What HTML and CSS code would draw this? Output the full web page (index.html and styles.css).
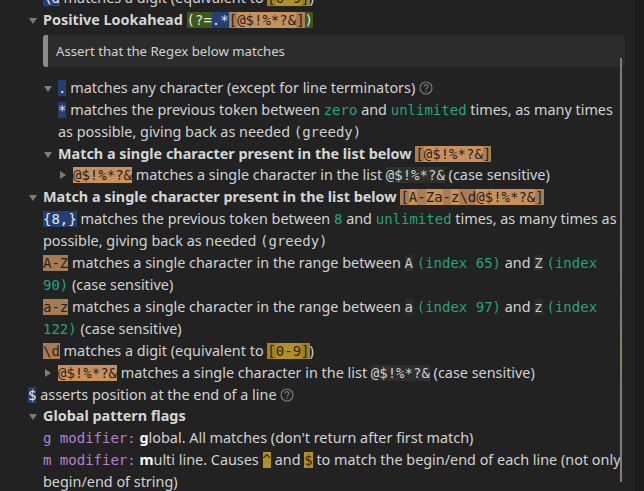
FILE: index.html
```html
<!DOCTYPE html>
<html>
<head>
<meta charset="utf-8">
<link rel="stylesheet" href="styles.css">
</head>
<body>
<div class="page">
  <div class="panel">
    <div class="root">
      <div class="kids first">
        <div class="row"><span class="tk meta">\d</span> matches a digit (equivalent to <span class="tk yel"><span class="yd">[</span>0-9<span class="yd">]</span></span>)</div>
      </div>
      <div class="row t head"><span class="tog down"></span>Positive Lookahead <span class="tk grp">(?=</span><span class="tk meta">.*</span><span class="tk cls"><span class="cd">[</span>@$!%*?&amp;<span class="cd">]</span></span><span class="tk grp">)</span></div>
      <div class="kids">
        <div class="quote">Assert that the Regex below matches</div>
        <div class="row t"><span class="tog down"></span><span class="tk meta">.</span> matches any character (except for line terminators) <svg class="help" width="14" height="14" viewBox="0 0 14 14"><circle cx="7" cy="7" r="6" fill="none" stroke="#7a7a7a" stroke-width="1.2"/><path d="M5.1 5.6a1.9 1.9 0 1 1 2.7 1.7c-.6.3-.8.6-.8 1.2" fill="none" stroke="#7a7a7a" stroke-width="1.2"/><circle cx="7" cy="10.2" r=".75" fill="#7a7a7a"/></svg></div>
        <div class="kids">
          <div class="row"><span class="tk meta">*</span> matches the previous token between <span class="mono grn">zero</span> and <span class="mono grn">unlimited</span> times, as many times as possible, giving back as needed <span class="mono">(greedy)</span></div>
        </div>
        <div class="row t head"><span class="tog down"></span>Match a single character present in the list below <span class="tk cls"><span class="cd">[</span>@$!%*?&amp;<span class="cd">]</span></span></div>
        <div class="kids">
          <div class="row t"><span class="tog right"></span><span class="tk cls">@$!%*?&amp;</span> matches a single character in the list <span class="tk code">@$!%*?&amp;</span> (case sensitive)</div>
        </div>
      </div>
      <div class="row t head"><span class="tog down"></span>Match a single character present in the list below <span class="tk cls"><span class="cd">[</span>A<span class="cd">-</span>Za<span class="cd">-</span>z<span class="cd">\d</span>@$!%*?&amp;<span class="cd">]</span></span></div>
      <div class="kids">
        <div class="row"><span class="tk meta">{8,}</span> matches the previous token between <span class="mono grn">8</span> and <span class="mono grn">unlimited</span> times, as many times as possible, giving back as needed <span class="mono">(greedy)</span></div>
        <div class="row"><span class="tk rng">A-Z</span> matches a single character in the range between <span class="tk code">A</span> <span class="mono grn">(index 65)</span> and <span class="tk code">Z</span> <span class="mono grn">(index 90)</span> (case sensitive)</div>
        <div class="row"><span class="tk rng">a-z</span> matches a single character in the range between <span class="tk code">a</span> <span class="mono grn">(index 97)</span> and <span class="tk code">z</span> <span class="mono grn">(index 122)</span> (case sensitive)</div>
        <div class="row"><span class="tk rng">\d</span> matches a digit (equivalent to <span class="tk yel"><span class="yd">[</span>0-9<span class="yd">]</span></span>)</div>
        <div class="row t"><span class="tog right"></span><span class="tk cls">@$!%*?&amp;</span> matches a single character in the list <span class="tk code">@$!%*?&amp;</span> (case sensitive)</div>
      </div>
      <div class="row"><span class="tk meta">$</span> asserts position at the end of a line <svg class="help" width="14" height="14" viewBox="0 0 14 14"><circle cx="7" cy="7" r="6" fill="none" stroke="#7a7a7a" stroke-width="1.2"/><path d="M5.1 5.6a1.9 1.9 0 1 1 2.7 1.7c-.6.3-.8.6-.8 1.2" fill="none" stroke="#7a7a7a" stroke-width="1.2"/><circle cx="7" cy="10.2" r=".75" fill="#7a7a7a"/></svg></div>
      <div class="row t head"><span class="tog down"></span>Global pattern flags</div>
      <div class="kids">
        <div class="row"><span class="mono pur">g modifier:</span> <b class="em">g</b>lobal. All matches (don't return after first match)</div>
        <div class="row"><span class="mono pur">m modifier:</span> <b class="em">m</b>ulti line. Causes <span class="tk yel">^</span> and <span class="tk yel">$</span> to match the begin/end of each line (not only begin/end of string)</div>
      </div>
    </div>
    <div class="scrollmark"></div>
  </div>
  <div class="gutter"></div>
</div>
</body>
</html>
```

FILE: styles.css
```css
html, body {
  margin: 0;
  padding: 0;
  background: #222222;
  overflow: hidden;
}
.page {
  display: flex;
  width: 644px;
  height: 491px;
  overflow: hidden;
}
.panel {
  position: relative;
  width: 635px;
  height: 491px;
  background: #222222;
  overflow: hidden;
}
.gutter {
  width: 9px;
  height: 491px;
  background: #1c1c1c;
}
.root {
  width: 596px;
  padding-left: 28px;
  margin-top: -13px;
  font-family: "Noto Sans", "Open Sans", sans-serif;
  font-size: 14.4px;
  line-height: 21.9px;
  color: #d2d2d2;
}
.kids {
  padding-left: 15px;
}
.row.t {
  padding-left: 15px;
}
.head {
  font-weight: 700;
  color: #d6d6d6;
}
.tog {
  display: inline-block;
  width: 15px;
  margin-left: -15px;
  height: 10px;
  position: relative;
}
.tog.down::before {
  content: "";
  position: absolute;
  left: 1px;
  top: 3px;
  border-left: 4px solid transparent;
  border-right: 4px solid transparent;
  border-top: 6px solid #7c7c7c;
}
.tog.right::before {
  content: "";
  position: absolute;
  left: 2px;
  top: 1px;
  border-top: 4px solid transparent;
  border-bottom: 4px solid transparent;
  border-left: 6px solid #7c7c7c;
}
.tk, .mono {
  font-family: "DejaVu Sans Mono", monospace;
  font-size: 14px;
  font-weight: 400;
  line-height: 14px;
}
.mono { color: #cfcfcf; }
.grn { color: #21a677; }
.pur { color: #b97fd3; }
.meta {
  background: #224075;
  color: #e6e6e6;
}
.grp {
  background: #3b5a19;
  color: #e0e0e0;
}
.cls {
  background: #c6915f;
  color: #2b2017;
}
.cd {
  background: #a97e54;
}
.rng {
  background: #a87c53;
  color: #2b2017;
}
.yel {
  background: #b39027;
  color: #2e2610;
}
.yd {
  background: #a08022;
}
.code {
  background: #2e2e2e;
  color: #cfcfcf;
}
.em {
  font-weight: 700;
  color: #ffffff;
}
.help {
  vertical-align: -2px;
}
.quote {
  margin: 4px -1px 10px 0;
  background: #2c2c2c;
  border-left: 5px solid #8a8a8a;
  border-radius: 3px;
  padding: 7px 8px 7px 8px;
  font-size: 13.2px;
  line-height: 18px;
  color: #d2d2d2;
}
.scrollmark {
  position: absolute;
  left: 620px;
  top: 58px;
  width: 2px;
  height: 424px;
  background: linear-gradient(#7d7d7d 0%, #7d7d7d 50%, #6f7a8a 55%, #7d7d7d 62%, #8a8062 70%, #7d7d7d 78%, #7d7d7d 100%);
}
```
